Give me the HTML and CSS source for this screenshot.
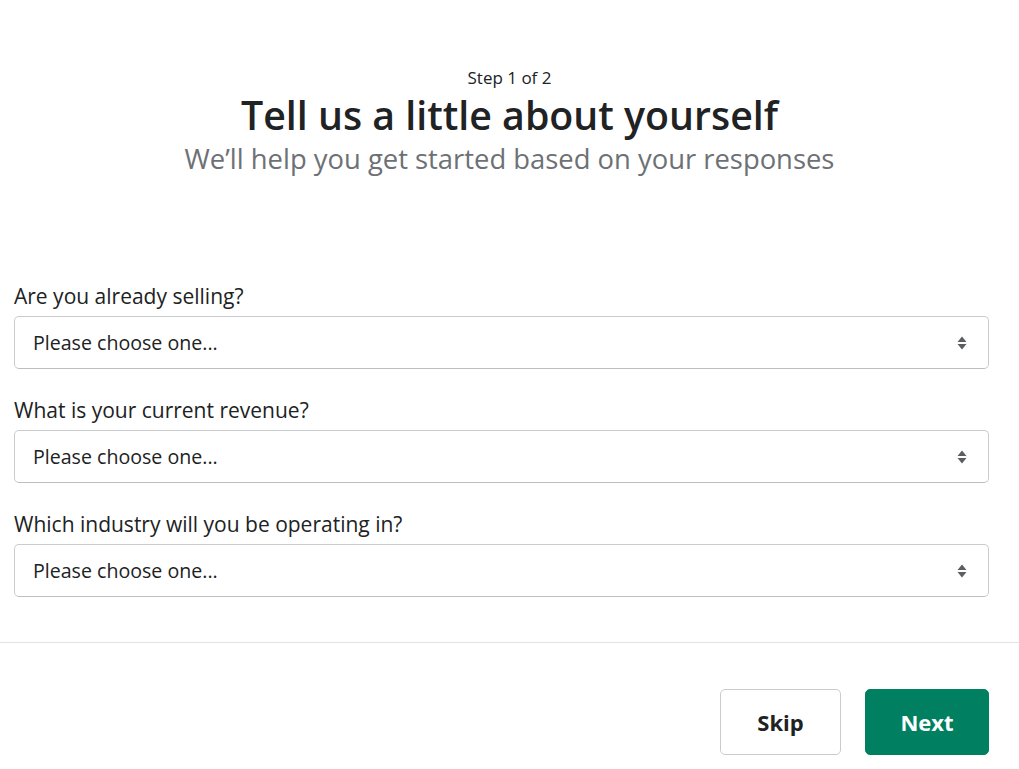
FILE: index.html
```html
<!DOCTYPE html>
<html lang="en">
<head>
<meta charset="utf-8">
<title>Tell us a little about yourself</title>
<link rel="stylesheet" href="styles.css">
</head>
<body>
<main class="page">
  <header class="intro">
    <p class="step">Step 1 of 2</p>
    <h1 class="title">Tell us a little about yourself</h1>
    <p class="subtitle">We’ll help you get started based on your responses</p>
  </header>
  <form class="form">
    <div class="field">
      <label class="label">Are you already selling?</label>
      <div class="select"><span>Please choose one...</span><svg class="arrows" viewBox="0 0 12 16" width="12" height="16"><path d="M6 1.5 L10.5 7 H1.5 Z M1.5 9 H10.5 L6 14.5 Z" fill="#5c5f62"/></svg></div>
    </div>
    <div class="field">
      <label class="label">What is your current revenue?</label>
      <div class="select"><span>Please choose one...</span><svg class="arrows" viewBox="0 0 12 16" width="12" height="16"><path d="M6 1.5 L10.5 7 H1.5 Z M1.5 9 H10.5 L6 14.5 Z" fill="#5c5f62"/></svg></div>
    </div>
    <div class="field">
      <label class="label">Which industry will you be operating in?</label>
      <div class="select"><span>Please choose one...</span><svg class="arrows" viewBox="0 0 12 16" width="12" height="16"><path d="M6 1.5 L10.5 7 H1.5 Z M1.5 9 H10.5 L6 14.5 Z" fill="#5c5f62"/></svg></div>
    </div>
  </form>
  <footer class="actions">
    <button class="btn btn-skip" type="button">Skip</button>
    <button class="btn btn-next" type="button">Next</button>
  </footer>
</main>
</body>
</html>
```

FILE: styles.css
```css
* { box-sizing: border-box; }
html, body { margin: 0; padding: 0; background: #fff; }
body {
  font-family: "Open Sans", "Noto Sans", sans-serif;
  color: #202223;
}
.page { width: 1019px; }
.intro {
  text-align: center;
  padding-top: 66px;
}
.step {
  margin: 0;
  font-size: 17px;
  line-height: 24px;
  color: #202223;
}
.title {
  margin: 0;
  font-size: 39.3px;
  line-height: 50px;
  font-weight: 600;
}
.subtitle {
  margin: 0;
  font-size: 27.4px;
  line-height: 38px;
  color: #6d7175;
}
.form {
  padding: 105px 30px 0 14px;
  display: flex;
  flex-direction: column;
  gap: 28px;
}
.field { display: flex; flex-direction: column; gap: 7px; }
.label { font-size: 21px; line-height: 26px; }
.select {
  height: 53px;
  border: 1px solid #c9cccf;
  border-bottom-color: #babfc3;
  border-radius: 5px;
  display: flex;
  align-items: center;
  justify-content: space-between;
  padding: 0 20px 0 18px;
  font-size: 19.6px;
}
.actions {
  margin-top: 45px;
  border-top: 1px solid #e1e3e5;
  padding: 46px 30px 0 0;
  display: flex;
  justify-content: flex-end;
  gap: 24px;
}
.btn {
  height: 66px;
  border-radius: 5px;
  font-family: inherit;
  font-size: 22px;
  font-weight: 700;
  padding: 0;
}
.btn-skip {
  width: 121px;
  background: #fff;
  border: 1px solid #c9cccf;
  color: #202223;
}
.btn-next {
  width: 124px;
  background: #008060;
  border: 1px solid #008060;
  color: #fff;
}
```
